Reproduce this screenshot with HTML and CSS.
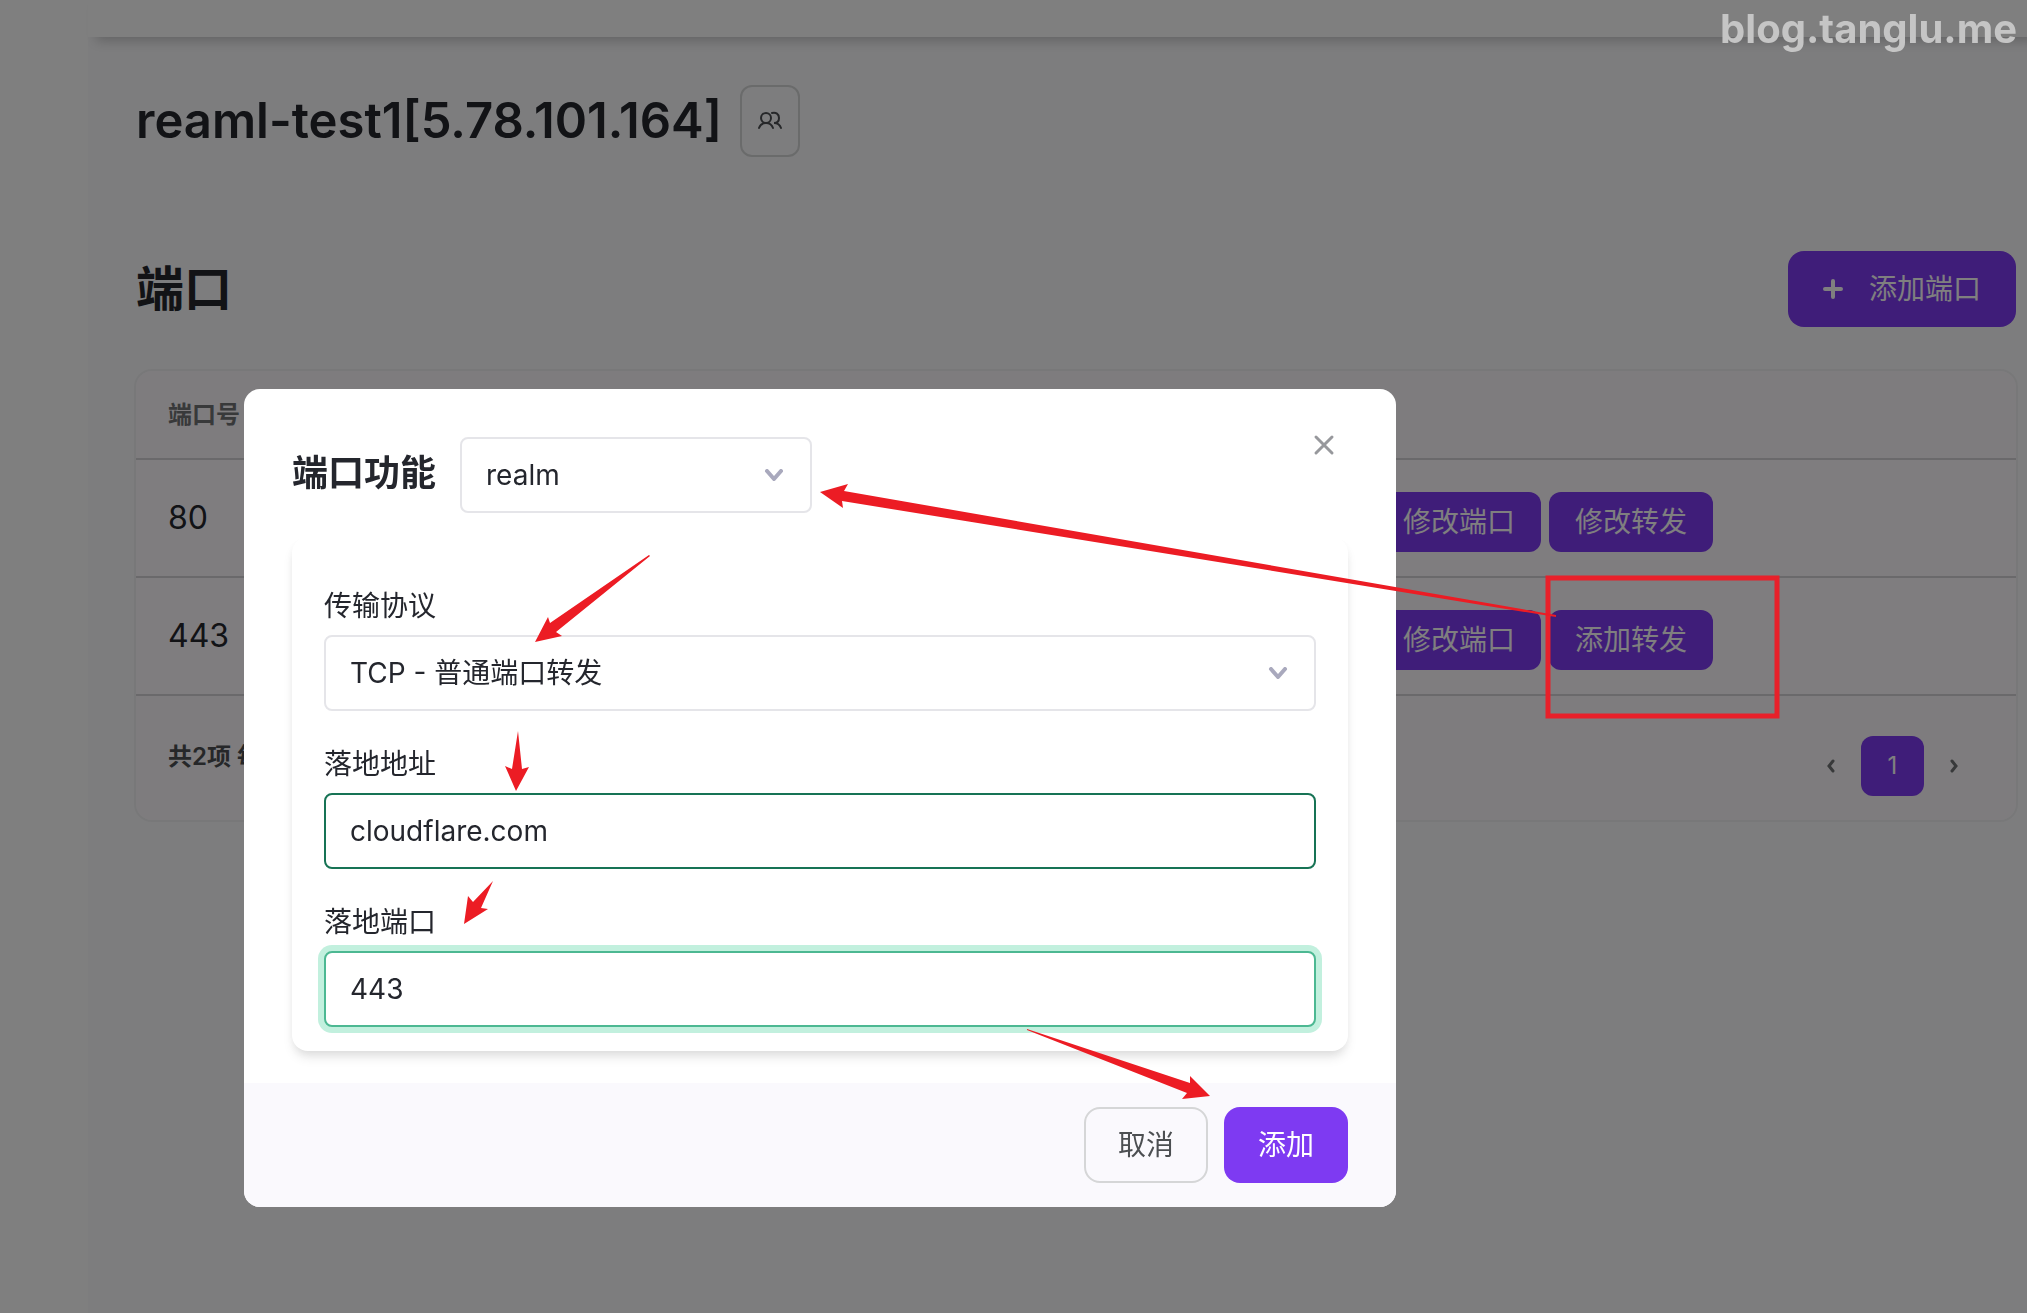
FILE: index.html
```html
<!DOCTYPE html>
<html lang="zh-CN">

<head>
    <meta charset="UTF-8">
    <meta name="viewport" content="width=device-width, initial-scale=1.0">
    <title>端口</title>
    <link rel="stylesheet" href="styles.css">
</head>

<body>
    <div class="layout">
        <aside class="sidebar"></aside>

        <div class="content">
            <header class="topbar"></header>

            <main>
                <div class="server-title">
                    <h1>reaml-test1[5.78.101.164]</h1>
                    <button type="button" class="btn-users" aria-label="用户">
                        <svg width="24" height="24" viewBox="0 0 24 24" fill="none" stroke="currentColor" stroke-width="2" stroke-linecap="round">
                            <circle cx="8" cy="9" r="5" />
                            <path d="M1 19c1-3 4-5 7-5s6 2 7 5" />
                            <path d="M14 4c4-1 7 1 7 5 0 3-2 5-5 5 4 0 6 2 7 5" />
                        </svg>
                    </button>
                </div>

                <div class="section-head">
                    <h2>端口</h2>
                    <button type="button" class="btn btn-primary btn-add">
                        <svg width="20" height="20" viewBox="0 0 20 20" fill="none" stroke="currentColor" stroke-width="4" stroke-linecap="round">
                            <path d="M10 2v16M2 10h16" />
                        </svg>
                        添加端口
                    </button>
                </div>

                <div class="table-card">
                    <table>
                        <thead>
                            <tr>
                                <th class="col-port">端口号</th>
                                <th></th>
                            </tr>
                        </thead>
                        <tbody>
                            <tr>
                                <td class="port">80</td>
                                <td>
                                    <div class="actions">
                                        <button type="button" class="btn-small">修改端口</button>
                                        <button type="button" class="btn-small">修改转发</button>
                                    </div>
                                </td>
                            </tr>
                            <tr>
                                <td class="port">443</td>
                                <td>
                                    <div class="actions">
                                        <button type="button" class="btn-small">修改端口</button>
                                        <button type="button" class="btn-small">添加转发</button>
                                    </div>
                                </td>
                            </tr>
                        </tbody>
                    </table>
                    <div class="table-footer">
                        <span>共2项 每页10项</span>
                        <nav class="pagination">
                            <button type="button" class="page-arrow" aria-label="上一页">
                                <svg width="10" height="16" viewBox="0 0 10 16" fill="none" stroke="currentColor" stroke-width="3" stroke-linecap="round"><path d="M7 3L3 8l4 5" /></svg>
                            </button>
                            <button type="button" class="page-current">1</button>
                            <button type="button" class="page-arrow" aria-label="下一页">
                                <svg width="10" height="16" viewBox="0 0 10 16" fill="none" stroke="currentColor" stroke-width="3" stroke-linecap="round"><path d="M3 3l4 5-4 5" /></svg>
                            </button>
                        </nav>
                    </div>
                </div>
            </main>
        </div>
    </div>

    <div class="overlay">
        <form class="modal" role="dialog" aria-labelledby="modal-title">
            <div class="modal-header">
                <label for="port-function" id="modal-title">端口功能</label>
                <div class="select-box select-function">
                    <select id="port-function" class="field">
                        <option>realm</option>
                    </select>
                    <svg class="chevron" width="20" height="12" viewBox="0 0 20 12" fill="none" stroke="currentColor" stroke-width="4" stroke-linecap="round" stroke-linejoin="round"><path d="M3 2l7 8 7-8" /></svg>
                </div>
                <button type="button" class="btn-close" aria-label="关闭">
                    <svg width="24" height="24" viewBox="0 0 24 24" fill="none" stroke="currentColor" stroke-width="3" stroke-linecap="round"><path d="M4 4l16 16M20 4L4 20" /></svg>
                </button>
            </div>

            <div class="form-card">
                <div class="form-group">
                    <label for="protocol">传输协议</label>
                    <div class="select-box">
                        <select id="protocol" class="field">
                            <option>TCP - 普通端口转发</option>
                        </select>
                        <svg class="chevron" width="20" height="12" viewBox="0 0 20 12" fill="none" stroke="currentColor" stroke-width="4" stroke-linecap="round" stroke-linejoin="round"><path d="M3 2l7 8 7-8" /></svg>
                    </div>
                </div>
                <div class="form-group">
                    <label for="address">落地地址</label>
                    <input type="text" id="address" class="field field-valid" value="cloudflare.com">
                </div>
                <div class="form-group">
                    <label for="port">落地端口</label>
                    <input type="text" id="port" class="field field-active" value="443">
                </div>
            </div>

            <div class="modal-footer">
                <button type="button" class="btn btn-outline">取消</button>
                <button type="submit" class="btn btn-primary">添加</button>
            </div>
        </form>
    </div>

    <!-- arrows and box that show the order of the steps -->
    <svg class="marks" width="2027" height="1313" viewBox="0 0 2027 1313" fill="#ec1c24">
        <rect x="1548" y="578" width="229" height="138" fill="none" stroke="#e8202a" stroke-width="5" />
        <path d="M820 492L848 484L844 491L1556 615L1556 617L842 501L843 508Z" />
        <path d="M535 642L548 617L550 623L649 555L650 556L556 632L562 636Z" />
        <path d="M516 791L505 766L512 769L518 731L522 769L529 767Z" />
        <path d="M464 924L468 896L473 902L493 881L481 908L488 909Z" />
        <path d="M1210 1096L1190 1076L1190 1083L1027 1029L1027 1030L1187 1093L1182 1099Z" />
    </svg>
    <div class="watermark">blog.tanglu.me</div>
</body>

</html>
```
FILE: styles.css
```css
* {
    margin: 0;
    padding: 0;
    box-sizing: border-box;
}

body {
    font-family: Inter, "Noto Sans CJK SC", sans-serif;
    font-size: 28px;
    line-height: 42px;
    background-color: #fafafc;
    color: #24262d;
    overflow: hidden;
}

button,
input,
select {
    font-family: inherit;
    font-size: 28px;
    line-height: 42px;
    color: inherit;
}

button {
    border: none;
    background: none;
    cursor: pointer;
}

svg {
    display: block;
}

/* Page */
.layout {
    display: flex;
    min-height: 100vh;
}

.sidebar {
    width: 88px;
    background-color: #fff;
}

.content {
    flex: 1;
}

.topbar {
    height: 37px;
    background-color: #fff;
    box-shadow: 8px 4px 12px rgba(0, 0, 0, 0.2);
}

main {
    padding: 48px 11px 0 48px;
}

.server-title {
    display: flex;
    align-items: center;
    gap: 18px;
}

h1,
h2 {
    font-size: 49px;
    line-height: 72px;
    font-weight: 600;
}

h2 {
    font-size: 48px;
    font-weight: 700;
}

.btn-users {
    display: flex;
    align-items: center;
    justify-content: center;
    width: 60px;
    height: 72px;
    border: 2px solid #d5d6d7;
    border-radius: 12px;
    color: #4c4f52;
}

.section-head {
    display: flex;
    align-items: center;
    justify-content: space-between;
    margin-top: 94px;
}

.btn {
    height: 76px;
    padding: 0 34px;
    border-radius: 16px;
}

.btn-primary {
    background-color: #7e3af2;
    color: #fff;
}

.btn-add {
    display: flex;
    align-items: center;
    gap: 26px;
    padding: 0 35px;
}

.table-card {
    margin-top: 44px;
    border-radius: 16px;
    box-shadow: 0 0 0 2px rgba(0, 0, 0, 0.04);
    overflow: hidden;
}

table {
    width: 100%;
    border-collapse: collapse;
    table-layout: fixed;
    text-align: left;
}

th,
td {
    height: 118px;
    padding: 0 32px;
    border-bottom: 2px solid #d5d2d7;
    background-color: #fffaff;
}

th {
    height: 88px;
    font-size: 24px;
    font-weight: 700;
    color: #707275;
    background-color: #fcf8fc;
}

.col-port {
    width: 1209px;
}

.port {
    font-size: 32px;
}

.actions {
    display: flex;
    gap: 8px;
    padding-top: 8px;
}

.btn-small {
    height: 60px;
    padding: 0 26px;
    border-radius: 12px;
    background-color: #7e3af2;
    color: #fff;
}

.table-footer {
    display: flex;
    justify-content: space-between;
    height: 124px;
    padding: 40px 32px 24px;
    background-color: #fcf9fc;
    font-size: 24px;
    font-weight: 600;
    color: #4c4f52;
}

.pagination {
    display: flex;
    align-items: center;
}

.page-arrow {
    padding: 0 25px;
    color: #707275;
}

.page-current {
    width: 63px;
    height: 60px;
    border-radius: 12px;
    background-color: #7e3af2;
    color: #fff;
    font-size: 24px;
}

/* Modal */
.overlay {
    position: fixed;
    inset: 0;
    padding: 389px 244px 0;
    background-color: rgba(0, 0, 0, 0.5);
}

.modal {
    max-width: 1152px;
    background-color: #fff;
    border-radius: 16px;
    overflow: hidden;
}

.modal-header {
    display: flex;
    align-items: center;
    gap: 24px;
    padding: 48px 60px 24px 48px;
}

#modal-title {
    padding-bottom: 4px;
    font-size: 36px;
    font-weight: 700;
}

.select-box {
    position: relative;
}

.select-function {
    width: 352px;
}

.chevron {
    position: absolute;
    right: 28px;
    top: 32px;
    color: #a9a9bd;
    pointer-events: none;
}

.btn-close {
    align-self: flex-start;
    margin: -4px 0 0 auto;
    color: #97989c;
}

.field {
    display: block;
    width: 100%;
    height: 76px;
    padding: 0 24px;
    border: 2px solid #e5e5e9;
    border-radius: 8px;
    background-color: #fff;
    appearance: none;
    outline: none;
}

.field-valid {
    border-color: #177355;
}

.field-active {
    border-color: #4cb892;
    box-shadow: 0 0 0 6px #c2f0de;
}

.form-card {
    display: flex;
    flex-direction: column;
    gap: 32px;
    margin: 0 48px 32px;
    padding: 48px 32px 24px;
    border-radius: 16px;
    box-shadow: 0 8px 12px -2px rgba(0, 0, 0, 0.1), 0 4px 8px -2px rgba(0, 0, 0, 0.06);
}

.form-group {
    display: flex;
    flex-direction: column;
    gap: 8px;
}

.modal-footer {
    display: flex;
    justify-content: flex-end;
    gap: 16px;
    padding: 24px 48px;
    background-color: #faf9fd;
}

.btn-outline {
    border: 2px solid #d5d6d7;
    padding: 0 32px;
    color: #4c4f52;
}

/* Annotations */
.marks {
    position: absolute;
    top: 0;
    left: 0;
    pointer-events: none;
}

.watermark {
    position: absolute;
    top: 8px;
    right: 10px;
    font-size: 40px;
    font-weight: 700;
    color: #c5c5c5;
}
```
